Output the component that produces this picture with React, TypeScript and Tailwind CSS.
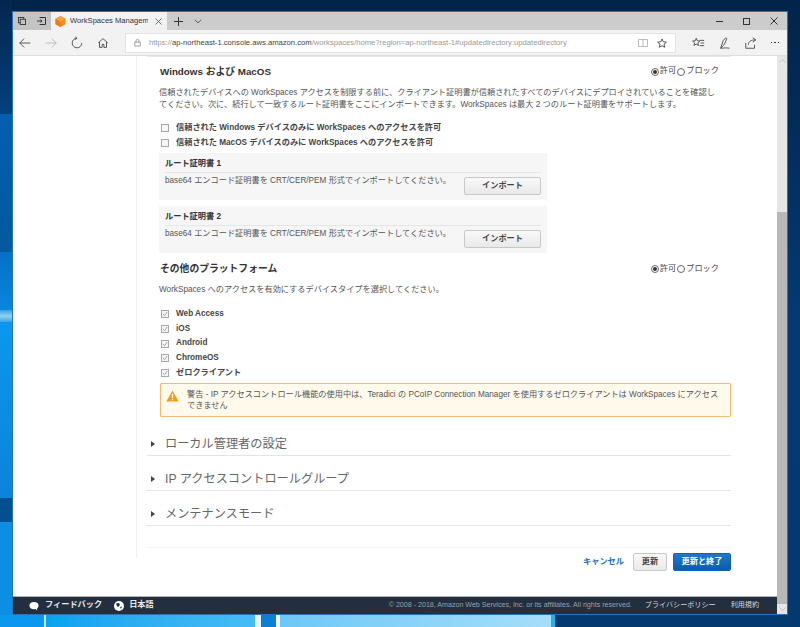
import React from "react";

function Check({ checked }: { checked?: boolean }) {
  return (
    <span className="w-[8px] h-[8px] border border-[#a9a9a9] bg-[#f6f6f6] flex items-center justify-center shrink-0">
      {checked && (
        <svg width="6" height="6" viewBox="0 0 7 7" fill="none">
          <path d="M1 3.500 L3 5.500 L6 1.200" stroke="#8d8d8d" strokeWidth="0.9" />
        </svg>
      )}
    </span>
  );
}

function Radio({ on }: { on?: boolean }) {
  return (
    <span className="w-[8px] h-[8px] rounded-full border border-[#666] bg-white flex items-center justify-center">
      {on && <span className="w-[4px] h-[4px] rounded-full bg-[#333]" />}
    </span>
  );
}

function AllowBlock() {
  return (
    <div className="flex items-center gap-[1px] text-[8.2px] text-[#444]">
      <Radio on />
      <span>許可</span>
      <Radio />
      <span>ブロック</span>
    </div>
  );
}

function CertBox({ title }: { title: string }) {
  return (
    <div className="w-[388px] h-[47px] bg-[#f6f6f6] px-[6px] pt-[5px] flex flex-col">
      <div className="text-[8.2px] font-bold text-[#333] leading-[11px] h-[15px] border-b border-[#e6e6e6]">{title}</div>
      <div className="flex justify-between">
        <span className="text-[8.2px] text-[#555] leading-[12px] pt-[2px] whitespace-nowrap">base64 エンコード証明書を CRT/CER/PEM 形式でインポートしてください。</span>
        <button className="w-[77px] h-[18px] shrink-0 mt-[4px] rounded-[2px] border border-[#c8c8c8] bg-gradient-to-b from-[#f9f9f9] to-[#e9e9e9] text-[8.2px] font-bold text-[#444]">インポート</button>
      </div>
    </div>
  );
}

function CheckRow({ label, checked }: { label: string; checked?: boolean }) {
  return (
    <div className="flex items-center h-[14.7px] pl-[1px] gap-[7px]">
      <Check checked={checked} />
      <span className="text-[8.2px] font-bold text-[#444] leading-none">{label}</span>
    </div>
  );
}

function Section({ label }: { label: string }) {
  return (
    <div className="w-[584px] h-[35px] border-b border-[#e4e4e4] flex items-center gap-[10px] pl-[4px] pt-[12px]">
      <span className="w-0 h-0 border-y-[3px] border-y-transparent border-l-[4px] border-l-[#444]" />
      <span className="text-[12.2px] text-[#666] leading-none">{label}</span>
    </div>
  );
}

function Icon({ children }: { children: React.ReactNode }) {
  return (
    <svg width="14" height="14" viewBox="0 0 16 16" fill="none" stroke="#444" strokeWidth="1">
      {children}
    </svg>
  );
}

export default function App() {
  return (
    <div
      className="relative w-[800px] h-[627px] overflow-hidden bg-gradient-to-b from-[#02244a] via-[#033a70] to-[#03396e] pt-[11px] pl-[12px]"
      style={{ fontFamily: '"Liberation Sans", "Noto Sans CJK JP", sans-serif' }}
    >
      {/* wallpaper seen around the window */}
      <div className="absolute left-0 top-0 w-[12px] h-[627px] flex flex-col">
        <div className="h-[114px] bg-gradient-to-b from-[#03264f] to-[#03417f]" />
        <div className="h-[138px] bg-gradient-to-b from-[#045fae] to-[#04599f]" />
        <div className="h-[58px] bg-gradient-to-b from-[#0670c8] to-[#0787dc]" />
        <div className="h-[12px] bg-gradient-to-b from-[#2fa0e4] via-[#8fd0ef] to-[#2fa6ec]" />
        <div className="h-[176px] bg-gradient-to-b from-[#0a98ee] to-[#0a84da]" />
        <div className="h-[24px] bg-[#034f90]" />
        <div className="flex-1 bg-[#0a8fe4]" />
      </div>
      <div className="absolute left-0 right-0 top-[615px] h-[12px] flex">
        <div className="w-[44px] bg-[#0a98ee]" />
        <div className="w-[2px] bg-[#bfe8fb]" />
        <div className="w-[209px] bg-gradient-to-r from-[#06a2f0] to-[#45bcf5]" />
        <div className="w-[6px] bg-[#e4f5fd]" />
        <div className="w-[15px] bg-[#0a7fd4]" />
        <div className="w-[4px] bg-[#f0f9fe]" />
        <div className="w-[271px] bg-gradient-to-r from-[#6cc8f7] to-[#a5def9]" />
        <div className="w-[4px] bg-[#25b0e8]" />
        <div className="flex-1 bg-[#03396e]" />
      </div>

      {/* window */}
      <div className="relative w-[776px] h-[604px] flex flex-col bg-white border border-[#2a72b5]">
        {/* title bar */}
        <div className="h-[18px] bg-[#cccccc] flex items-stretch shrink-0">
          <div className="w-[38px] flex items-center pl-[5px] gap-[11px] bg-[#c4c4c4]">
            <svg width="8" height="8" viewBox="0 0 9 9" fill="none" stroke="#333"><rect x="0.500" y="0.500" width="6" height="6" /><rect x="2.500" y="2.500" width="6" height="6" fill="#c4c4c4" /></svg>
            <svg width="9" height="8" viewBox="0 0 9 8" fill="none" stroke="#333"><path d="M2.500 .5h6v7h-6M0 4h5M3.500 2.500 5 4 3.500 5.500" /></svg>
          </div>
          <div className="w-[116px] bg-[#f2f2f2] flex items-center pl-[4px] text-[7.6px] text-[#333] whitespace-nowrap">
            <svg width="11" height="11" viewBox="0 0 11 11" className="shrink-0"><path d="M5.500 0 10.500 2.700V8.300L5.500 11 .5 8.300V2.700Z" fill="#f58a1f" /><path d="M5.500 5.500V11L.5 8.300V2.700Z" fill="#ee7a12" /><path d="M5.500 0 10.500 2.700 5.500 5.500.5 2.700Z" fill="#f9a13e" /></svg>
            <span className="ml-[4px] w-[78px] overflow-hidden shrink-0">WorkSpaces Management Console</span>
            <svg width="7" height="7" viewBox="0 0 7 7" className="ml-[7px] shrink-0" stroke="#555" strokeWidth="0.8"><path d="M.5.5l6 6M6.500.5l-6 6" /></svg>
          </div>
          <div className="flex items-center pl-[7px] gap-[11px]">
            <svg width="9" height="9" viewBox="0 0 9 9" stroke="#333"><path d="M4.500 0v9M0 4.500h9" /></svg>
            <svg width="8" height="5" viewBox="0 0 9 6" fill="none" stroke="#444"><path d="M.8 1l3.700 3.700L8.200 1" /></svg>
          </div>
          <div className="flex-1" />
          <div className="flex items-center gap-[20px] pr-[9px]">
            <span className="w-[7px] h-px bg-[#333]" />
            <span className="w-[7px] h-[7px] border border-[#333]" />
            <svg width="8" height="8" viewBox="0 0 8 8" stroke="#333"><path d="M.5.5l7 7M7.500.5l-7 7" /></svg>
          </div>
        </div>
        {/* toolbar */}
        <div className="h-[26px] bg-[#f2f2f2] border-b border-[#dedede] flex items-center shrink-0">
          <div className="flex items-center w-[112px] pl-[5px] gap-[12px]">
            <Icon><path d="M14 8H2M7 3 2 8l5 5" /></Icon>
            <Icon><path d="M2 8h12M9 3l5 5-5 5" stroke="#b5b5b5" /></Icon>
            <Icon><path d="M8 2.500A5.500 5.500 0 1 0 13.500 8M8 2.500 6 1M8 2.500 6.200 4.400" /></Icon>
            <Icon><path d="M2.500 8 8 3l5.500 5M4 7v6h3V9.500h2V13h3V7" /></Icon>
          </div>
          <div className="w-[551px] h-[20px] bg-white border border-[#e4e4e4] flex items-center pl-[8px] pr-[8px] text-[7.65px] text-[#9a9a9a] whitespace-nowrap">
            <svg width="7" height="9" viewBox="0 0 9 10" fill="none" stroke="#888" className="mr-[8px]"><rect x="1" y="4.500" width="7" height="5" /><path d="M2.500 4.500V3a2 2 0 0 1 4 0v1.500" /></svg>
            <span>https://</span><span className="text-[#444]">ap-northeast-1.console.aws.amazon.com</span><span>/workspaces/home?region=ap-northeast-1#updatedirectory:updatedirectory</span>
            <span className="flex-1" />
            <svg width="10" height="10" viewBox="0 0 10 10" fill="none" stroke="#bdbdbd" className="mr-[9px]"><path d="M.5 1.500h9v7h-9zM5 1.500v7" /></svg>
            <svg width="10" height="10" viewBox="0 0 16 16" fill="none" stroke="#333" strokeWidth="1.300"><path d="M8 1.500l2 4.600 5 .5-3.800 3.300 1.100 4.900L8 12.300 3.700 14.800l1.100-4.900L1 6.600l5-.5z" /></svg>
          </div>
          <div className="flex-1 flex items-center justify-between pl-[15px] pr-[8px]">
            <Icon><path d="M6 2.500l1.200 3 3 .3-2.300 2 .7 3-2.600-1.600-2.600 1.600.7-3-2.300-2 3-.3zM10 5h5M11 8h4M10 11h5" /></Icon>
            <Icon><path d="M3 14 6 5l3-3 1 1-2 5-2 3zM3 14c3 0 5-1 10 0" /></Icon>
            <Icon><path d="M2 8v6h10v-4M5 10c0-4 3-5.500 8-5.500M10 2l3.500 2.500L10 7" /></Icon>
            <div className="flex gap-[2px]">
              <span className="w-[1.500px] h-[1.500px] bg-[#333]" />
              <span className="w-[1.500px] h-[1.500px] bg-[#333]" />
              <span className="w-[1.500px] h-[1.500px] bg-[#333]" />
            </div>
          </div>
        </div>
        {/* page */}
        <div className="flex-1 flex min-h-0">
          <div className="w-[764px] flex flex-col">
            <div className="flex-1 min-h-0 pl-[123px]">
              <div className="h-[502px] border-l border-[#f0f0f0] pl-[10px] flex flex-col">
                <div className="w-[584px] h-px bg-[#e8e8e8] shrink-0" />
                <div className="pl-[13px] w-[584px] pt-[9px] shrink-0">
                  <div className="flex justify-between items-center h-[11px] pr-[12px]">
                    <h3 className="text-[9.8px] font-bold text-[#333] leading-none">Windows および MacOS</h3>
                    <AllowBlock />
                  </div>
                  <p className="mt-[10px] -ml-[1px] w-[561px] text-[8.2px] leading-[11.500px] text-[#555]">
                    信頼されたデバイスへの WorkSpaces アクセスを制限する前に、クライアント証明書が信頼されたすべてのデバイスにデプロイされていることを確認してください。次に、続行して一致するルート証明書をここにインポートできます。WorkSpaces は最大 2 つのルート証明書をサポートします。
                  </p>
                  <div className="mt-[11px] flex flex-col">
                    <CheckRow label="信頼された Windows デバイスのみに WorkSpaces へのアクセスを許可" />
                    <CheckRow label="信頼された MacOS デバイスのみに WorkSpaces へのアクセスを許可" />
                  </div>
                  <div className="mt-[3px] flex flex-col gap-[6px] -ml-[1px]">
                    <CertBox title="ルート証明書 1" />
                    <CertBox title="ルート証明書 2" />
                  </div>
                  <div className="flex justify-between items-center h-[11px] pr-[12px] mt-[10px]">
                    <h3 className="text-[9.8px] font-bold text-[#333] leading-none">その他のプラットフォーム</h3>
                    <AllowBlock />
                  </div>
                  <p className="mt-[10px] text-[8.2px] leading-[11.500px] text-[#555] -ml-[1px]">WorkSpaces へのアクセスを有効にするデバイスタイプを選択してください。</p>
                  <div className="mt-[11px] flex flex-col">
                    <CheckRow checked label="Web Access" />
                    <CheckRow checked label="iOS" />
                    <CheckRow checked label="Android" />
                    <CheckRow checked label="ChromeOS" />
                    <CheckRow checked label="ゼロクライアント" />
                  </div>
                  <div className="mt-[3px] w-[571px] h-[34px] border border-[#f5b971] bg-[#fffaeb] rounded-[1px] flex items-start pl-[5px] pt-[5px]">
                    <svg width="13" height="12" viewBox="0 0 14 13" className="mt-[1px] shrink-0"><path d="M7 .5 13.700 12.500H.3Z" fill="#f59a17" /><rect x="6.300" y="4" width="1.400" height="5" fill="#fff" /><rect x="6.300" y="9.800" width="1.400" height="1.400" fill="#fff" /></svg>
                    <p className="ml-[8px] w-[538px] text-[8.2px] leading-[11px] text-[#555]">警告 - IP アクセスコントロール機能の使用中は、Teradici の PCoIP Connection Manager を使用するゼロクライアントは WorkSpaces にアクセスできません</p>
                  </div>
                </div>
                <div className="mt-[4px] shrink-0">
                  <Section label="ローカル管理者の設定" />
                  <Section label="IP アクセスコントロールグループ" />
                  <Section label="メンテナンスモード" />
                </div>
                <div className="w-[584px] h-px bg-[#f4f4f4] mt-[21px] shrink-0" />
                {/* action buttons */}
                <div className="w-[584px] h-[18px] mt-[5px] flex items-center justify-end shrink-0">
                  <a className="text-[8.2px] font-bold text-[#1b6fc0]">キャンセル</a>
                  <button className="ml-[9px] w-[34px] h-[18px] rounded-[2px] border border-[#c8c8c8] bg-gradient-to-b from-[#f9f9f9] to-[#e9e9e9] text-[8.2px] font-bold text-[#444]">更新</button>
                  <button className="ml-[6px] w-[58px] h-[18px] rounded-[2px] border border-[#0f62ad] bg-gradient-to-b from-[#1f79cc] to-[#0b5bab] text-[8.2px] font-bold text-white">更新と終了</button>
                </div>
              </div>
            </div>
            {/* footer */}
            <div className="h-[18px] bg-[#232f3e] border-t border-[#aeb1b5] flex items-center pl-[16px] pr-[18px] text-white shrink-0">
              <svg width="10" height="10" viewBox="0 0 11 10" fill="#fff"><ellipse cx="5.500" cy="4.500" rx="5" ry="4" /><path d="M7 8l2 2-.2-3z" /></svg>
              <span className="ml-[6px] text-[8.2px] font-bold text-[#e8e8e8]">フィードバック</span>
              <svg width="10" height="10" viewBox="0 0 10 10" className="ml-[12px]"><circle cx="5" cy="5" r="5" fill="#fff" /><path d="M2 2.500 5 2 6 4 4 6 3 5zM6 6l2-.5L7 8z" fill="#232f3e" /></svg>
              <span className="ml-[5px] text-[8.2px] font-bold text-[#e8e8e8]">日本語</span>
              <span className="flex-1" />
              <span className="text-[7.1px] text-[#9aa0a6]">© 2008 - 2018, Amazon Web Services, Inc. or its affiliates. All rights reserved.</span>
              <span className="ml-[13px] text-[7.1px] text-[#d8d8d8]">プライバシーポリシー</span>
              <span className="ml-[15px] text-[7.1px] text-[#d8d8d8]">利用規約</span>
            </div>
          </div>
          {/* scrollbar */}
          <div className="w-[10px] bg-[#e6e6e6] flex flex-col items-center">
            <div className="h-[10px] flex items-center">
              <svg width="7" height="4" viewBox="0 0 7 4" fill="none" stroke="#c0c0c0"><path d="M.5 3.500 3.500.5l3 3" /></svg>
            </div>
            <div className="h-[146px]" />
            <div className="w-full flex-1 bg-[#b8b8b8]" />
            <div className="h-[10px] flex items-center">
              <svg width="7" height="4" viewBox="0 0 7 4" fill="none" stroke="#c0c0c0"><path d="M.5.5l3 3 3-3" /></svg>
            </div>
          </div>
        </div>
      </div>
    </div>
  );
}
